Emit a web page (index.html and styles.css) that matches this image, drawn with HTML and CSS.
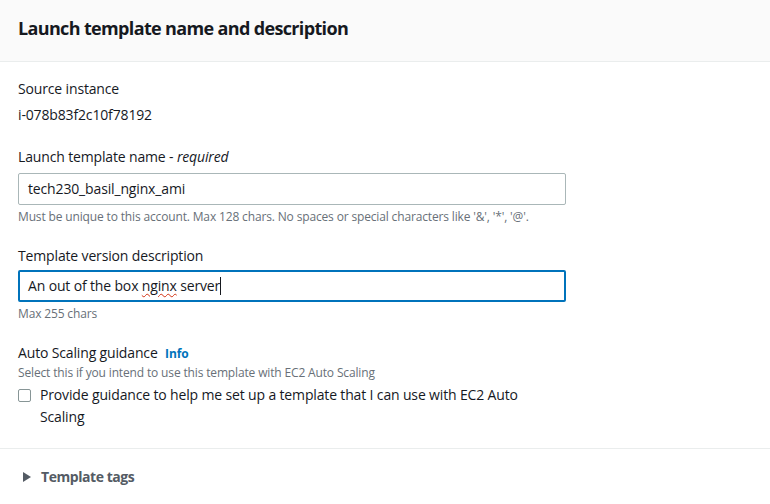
FILE: index.html
```html
<!DOCTYPE html>
<html>
<head>
<meta charset="utf-8">
<link rel="stylesheet" href="styles.css">
</head>
<body>
<div class="panel">
  <div class="header"><h2 class="title">Launch template name and description</h2></div>
  <div class="content">
    <div class="field">
      <div class="label">Source instance</div>
      <div class="value">i-078b83f2c10f78192</div>
    </div>
    <div class="field">
      <div class="label">Launch template name - <i>required</i></div>
      <div class="input">tech230_basil_nginx_ami</div>
      <div class="hint">Must be unique to this account. Max 128 chars. No spaces or special characters like '&amp;', '*', '@'.</div>
    </div>
    <div class="field">
      <div class="label">Template version description</div>
      <div class="input focused">An out of the box <span class="spell">nginx</span> server<span class="caret"></span></div>
      <div class="hint">Max 255 chars</div>
    </div>
    <div class="field">
      <div class="label">Auto Scaling guidance <span class="info">Info</span></div>
      <div class="desc">Select this if you intend to use this template with EC2 Auto Scaling</div>
      <div class="check-row">
        <span class="checkbox"></span>
        <span class="check-text">Provide guidance to help me set up a template that I can use with EC2 Auto Scaling</span>
      </div>
    </div>
  </div>
  <div class="expander">
    <svg class="tri" width="8" height="10" viewBox="0 0 8 10"><path d="M0 0 L8 5 L0 10 Z" fill="#545b64"/></svg>
    <span class="exp-title">Template tags</span>
  </div>
</div>
</body>
</html>
```
FILE: styles.css
```css
* { box-sizing: border-box; }
body {
  margin: 0;
  background: #ffffff;
  font-family: "Open Sans", "Noto Sans", Arial, sans-serif;
  color: #16191f;
  font-size: 14px;
  letter-spacing: -0.15px;
}
.panel { width: 770px; }
.header {
  height: 62px;
  background: #fafafa;
  border-bottom: 1px solid #eaeded;
  padding: 0 18px 5px 18px;
  display: flex;
  align-items: center;
}
.title {
  margin: 0;
  font-size: 18px;
  font-weight: 700;
  line-height: 24px;
  letter-spacing: -0.65px;
}
.content {
  padding: 16px 18px 20px 18px;
  border-bottom: 1px solid #eaeded;
  display: flex;
  flex-direction: column;
  gap: 20px;
}
.field { display: flex; flex-direction: column; }
.label { line-height: 22px; font-size: 14px; }
.label i { font-style: italic; }
.value { line-height: 22px; margin-top: 4px; }
.input {
  margin-top: 5px;
  width: 548px;
  height: 32px;
  border: 1px solid #aab7b8;
  border-radius: 2px;
  padding: 4px 9px;
  line-height: 22px;
  white-space: nowrap;
}
.input.focused {
  border: 2px solid #0073bb;
  padding: 3px 8px;
  margin-top: 3px;
}
.spell {
  text-decoration: underline wavy #d13212;
  text-decoration-thickness: 1px;
  text-underline-offset: 2px;
}
.caret {
  display: inline-block;
  width: 1px;
  height: 18px;
  background: #16191f;
  vertical-align: -4px;
}
.hint {
  font-size: 12px;
  line-height: 16px;
  color: #687078;
  margin-top: 4px;
}
.info {
  font-size: 12px;
  font-weight: 700;
  color: #0073bb;
  margin-left: 4px;
}
.desc {
  font-size: 12px;
  line-height: 16px;
  color: #687078;
}
.check-row {
  display: flex;
  align-items: flex-start;
  margin-top: 3px;
  width: 520px;
}
.checkbox {
  flex: none;
  width: 13px;
  height: 13px;
  border: 1px solid #879596;
  border-radius: 2px;
  margin-top: 5px;
  margin-right: 9px;
}
.check-text { line-height: 22px; }
.expander {
  padding: 17px 23px;
  display: flex;
  align-items: center;
  gap: 10px;
}
.exp-title {
  font-size: 14px;
  font-weight: 700;
  color: #545b64;
  line-height: 22px;
  letter-spacing: -0.45px;
}
```
